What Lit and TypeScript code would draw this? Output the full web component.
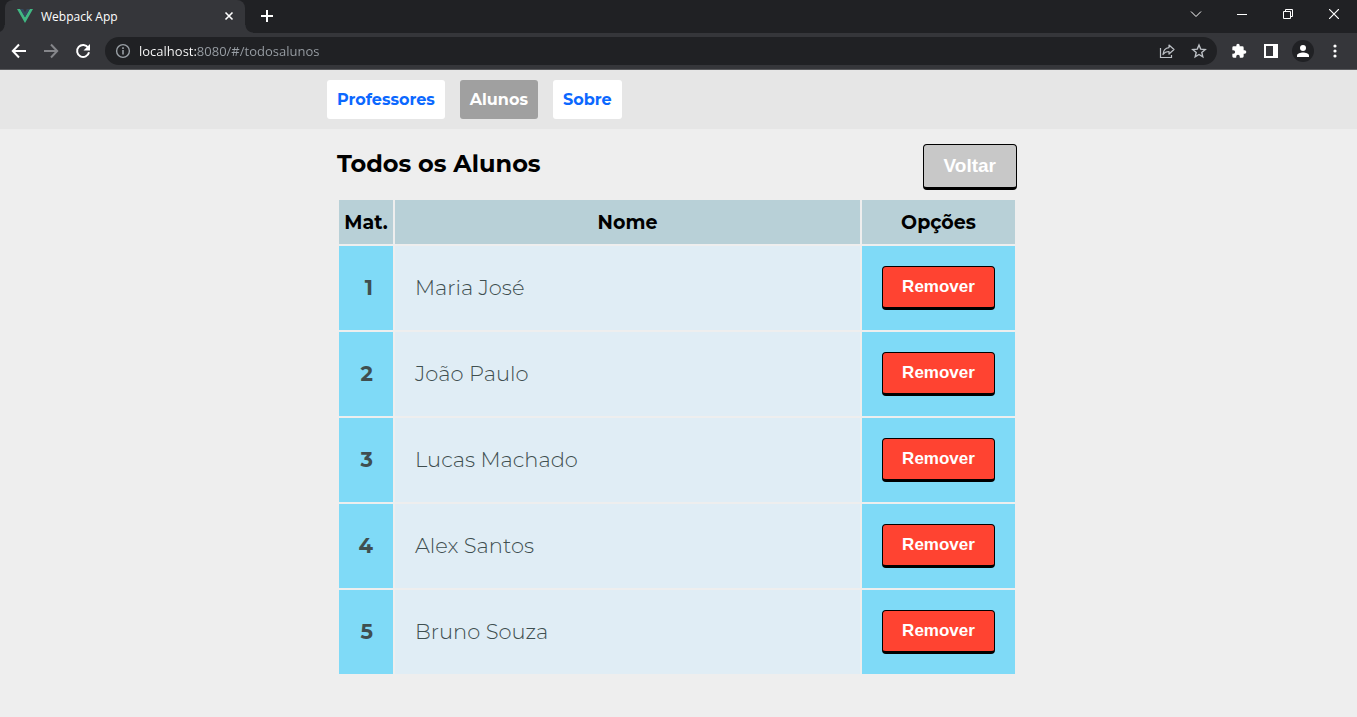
import { LitElement, html, css, svg } from "lit";
import { customElement, state } from "lit/decorators.js";

interface Aluno {
  mat: number;
  nome: string;
}

@customElement("browser-bar")
class BrowserBar extends LitElement {
  static styles = css`
    :host {
      display: block;
      font-family: "Segoe UI", "Open Sans", "Noto Sans", sans-serif;
      color: #fff;
      background: #202124;
    }
    button {
      display: grid;
      place-items: center;
      flex: none;
      padding: 0;
      border: 0;
      color: inherit;
      background: none;
    }
    svg {
      display: block;
      fill: none;
      stroke: currentColor;
    }
    .solid {
      fill: currentColor;
      stroke: none;
    }
    .strip {
      display: flex;
      height: 33px;
    }
    .flare-left {
      width: 5px;
      background: radial-gradient(circle at -3px 0, #202124 7px, #35363a 8px) bottom / 5px 8px no-repeat;
    }
    .flare-right {
      width: 8px;
      background: radial-gradient(circle at 8px 0, #202124 7px, #35363a 8px) bottom / 8px 8px no-repeat;
    }
    .tab {
      display: flex;
      align-items: center;
      box-sizing: border-box;
      width: 240px;
      padding: 0 8px 1px 12px;
      gap: 8px;
      font-size: 12px;
      background: #35363a;
      border-radius: 8px 8px 0 0;
    }
    .title {
      flex: 1;
    }
    .plus {
      width: 28px;
      height: 32px;
    }
    .controls {
      display: flex;
      margin-left: auto;
      height: 27px;
    }
    .controls button {
      width: 46px;
    }
    .toolbar {
      display: flex;
      align-items: center;
      height: 36px;
      padding-left: 3px;
      padding-right: 6px;
      background: #35363a;
      border-bottom: 1px solid #5a5b5e;
    }
    .toolbar button {
      width: 32px;
      height: 28px;
    }
    .toolbar .dim {
      color: #85868a;
    }
    .omnibox {
      display: flex;
      flex: 1;
      align-items: center;
      height: 28px;
      margin: 0 6px;
      padding: 0 2px 0 10px;
      border-radius: 14px;
      background: #202124;
      color: #bdc1c6;
    }
    .omnibox label {
      color: #9aa0a6;
    }
    .url {
      flex: 1;
      min-width: 0;
      margin-left: 8px;
      padding: 0;
      border: 0;
      outline: 0;
      font: 13px "Segoe UI", "Open Sans", "Noto Sans", sans-serif;
      color: transparent;
      background: linear-gradient(90deg, #fff 57px, #9aa0a6 57px);
      -webkit-background-clip: text;
      background-clip: text;
    }
    .avatar {
      display: grid;
      place-items: center;
      width: 22px;
      height: 22px;
      border-radius: 11px;
      background: #202124;
    }
  `;

  render() {
    return html`
      <div class="strip">
        <div class="flare-left"></div>
        <div class="tab">
          <svg width="16" height="16" viewBox="0 0 16 16">
            <path d="M0 1h3.200L8 9.300 12.800 1H16L8 15z" fill="#41b883" stroke="none" />
            <path d="M3.200 1h3L8 4.200 9.800 1h3L8 9.300z" fill="#35495e" stroke="none" />
          </svg>
          <span class="title">Webpack App</span>
          <button aria-label="Fechar guia">
            <svg width="16" height="16" viewBox="0 0 16 16" stroke-width="1.6">
              <path d="M4.500 4.500l7 7M11.500 4.500l-7 7" />
            </svg>
          </button>
        </div>
        <div class="flare-right"></div>
        <button class="plus" aria-label="Nova guia">
          <svg width="14" height="14" viewBox="0 0 14 14" stroke-width="2">
            <path d="M7 1v12M1 7h12" />
          </svg>
        </button>
        <div class="controls">
          <button aria-label="Pesquisar guias">
            <svg width="12" height="12" viewBox="0 0 12 12"><path d="M1 3.500l5 5 5-5" /></svg>
          </button>
          <button aria-label="Minimizar">
            <svg width="10" height="10" viewBox="0 0 10 10"><path d="M0 5.500h10" /></svg>
          </button>
          <button aria-label="Restaurar">
            <svg width="10" height="10" viewBox="0 0 10 10">
              <path d="M.5 2.500h7v7h-7zM2.500 2.500v-2h7v7h-2" />
            </svg>
          </button>
          <button aria-label="Fechar">
            <svg width="10" height="10" viewBox="0 0 10 10" stroke-width="1.2">
              <path d="M0 0l10 10M10 0L0 10" />
            </svg>
          </button>
        </div>
      </div>
      <div class="toolbar">
        <button aria-label="Voltar">
          <svg width="16" height="16" viewBox="0 0 16 16" stroke-width="2">
            <path d="M15 8H2M8 1.500L1.800 8 8 14.500" />
          </svg>
        </button>
        <button class="dim" aria-label="Avançar">
          <svg width="16" height="16" viewBox="0 0 16 16" stroke-width="2">
            <path d="M1 8h13M8 1.500L14.200 8 8 14.500" />
          </svg>
        </button>
        <button aria-label="Recarregar">
          <svg width="16" height="16" viewBox="0 0 16 16">
            <path d="M13.200 4.800A6 6 0 1 0 14 9.200" stroke-width="2" />
            <path class="solid" d="M15 1v6.500H8.500z" />
          </svg>
        </button>
        <div class="omnibox">
          <label for="url" aria-label="Endereço">
            <svg width="16" height="16" viewBox="0 0 16 16" stroke-width="1.4">
              <circle cx="8" cy="8" r="6.400" />
              <path d="M8 7v4.500M8 4.300v1.600" stroke-width="1.600" />
            </svg>
          </label>
          <input id="url" class="url" type="text" spellcheck="false" value="localhost:8080/#/todosalunos" />
          <button aria-label="Compartilhar">
            <svg width="16" height="16" viewBox="0 0 16 16" stroke-width="1.200">
              <path d="M1.500 5v9.500h11V12" />
              <path d="M10 2l5 4.500-5 4.500V8.500C7 8.500 5.300 9.500 4 11.500 4.300 7.500 6.500 5 10 4.600z" stroke-linejoin="round" />
            </svg>
          </button>
          <button aria-label="Favoritar">
            <svg width="16" height="16" viewBox="0 0 16 16" stroke-width="1.400">
              <path d="M8 2l1.700 4.100 4.500.4-3.400 2.900 1 4.400L8 11.500l-3.800 2.300 1-4.400L1.800 6.500l4.500-.4z" />
            </svg>
          </button>
        </div>
        <button aria-label="Extensões">
          <svg class="solid" width="16" height="16" viewBox="0 0 24 24">
            <path d="M20.500 11H19V7a2 2 0 0 0-2-2h-4V3.500a2.500 2.500 0 0 0-5 0V5H4a2 2 0 0 0-2 2v3.800h1.500a2.700 2.700 0 0 1 0 5.400H2V20a2 2 0 0 0 2 2h3.800v-1.500a2.700 2.700 0 0 1 5.400 0V22H17a2 2 0 0 0 2-2v-4h1.500a2.500 2.500 0 0 0 0-5z" />
          </svg>
        </button>
        <button aria-label="Painel lateral">
          <svg width="14" height="14" viewBox="0 0 14 14">
            <path class="solid" fill-rule="evenodd" d="M0 0h14v14H0zM2 2v10h7V2z" />
          </svg>
        </button>
        <button aria-label="Perfil">
          <span class="avatar">
            <svg class="solid" width="12" height="12" viewBox="0 0 12 12">
              <circle cx="6" cy="3" r="3" />
              <path d="M0 12v-1.500C0 8.500 3.500 7.500 6 7.500s6 1 6 3V12z" />
            </svg>
          </span>
        </button>
        <button aria-label="Menu">
          <svg class="solid" width="4" height="14" viewBox="0 0 4 14">
            ${[2, 7, 12].map((y) => svg`<circle cx="2" cy=${y} r="1.600" />`)}
          </svg>
        </button>
      </div>
    `;
  }
}

@customElement("app-root")
class AppRoot extends LitElement {
  @state() private alunos: Aluno[] = [
    { mat: 1, nome: "Maria José" },
    { mat: 2, nome: "João Paulo" },
    { mat: 3, nome: "Lucas Machado" },
    { mat: 4, nome: "Alex Santos" },
    { mat: 5, nome: "Bruno Souza" },
  ];

  static styles = css`
    :host {
      display: block;
      min-height: 100vh;
      font-family: Montserrat, Inter, sans-serif;
      color: #000;
      background: #eee;
    }
    nav {
      padding: 10px 0;
      background: #e6e6e6;
    }
    .wrap {
      box-sizing: border-box;
      max-width: 703px;
      margin: 0 auto;
    }
    .links {
      display: flex;
      gap: 15px;
    }
    .links a {
      padding: 10px;
      border-radius: 3px;
      font-size: 16px;
      font-weight: 700;
      line-height: 19px;
      text-decoration: none;
      color: #0b68ff;
      background: #fff;
    }
    .links .active {
      color: #fff;
      background: #a0a0a0;
    }
    main {
      padding: 15px 13px 0 10px;
    }
    .head {
      display: flex;
      align-items: flex-start;
      justify-content: space-between;
      margin-bottom: 8px;
    }
    h1 {
      margin: 0;
      font-size: 24px;
      font-weight: 700;
      line-height: 40px;
    }
    .btn {
      box-sizing: border-box;
      padding: 0 20px;
      border: 1px solid #000;
      border-bottom-width: 3px;
      border-radius: 4px;
      font-family: Arial, "Liberation Sans", sans-serif;
      font-weight: 700;
      color: #fff;
      white-space: nowrap;
    }
    .back {
      height: 46px;
      font-size: 19px;
      background: #c8c8c8;
    }
    .remove {
      display: block;
      width: 100%;
      height: 44px;
      padding: 0;
      font-size: 17px;
      background: #ff4331;
    }
    table {
      width: 100%;
      table-layout: fixed;
      border-spacing: 2px;
    }
    th {
      padding: 0;
      height: 44px;
      font-size: 19px;
      font-weight: 700;
      background: #b8d0d7;
    }
    .c-mat {
      width: 54px;
    }
    .c-op {
      width: 153px;
    }
    td {
      padding: 20px;
      font-size: 21px;
      font-weight: 300;
      line-height: 24px;
      color: #3f4f50;
      background: #e0edf5;
    }
    .mat {
      padding: 0 20px 0 0;
      text-align: right;
      font-weight: 700;
      background: #7fdaf7;
    }
    .op {
      background: #7fdaf7;
    }
  `;

  private remover(mat: number) {
    this.alunos = this.alunos.filter((a) => a.mat !== mat);
  }

  render() {
    return html`
      <browser-bar></browser-bar>
      <nav>
        <div class="wrap links">
          <a href="#/professores">Professores</a>
          <a class="active" href="#/todosalunos">Alunos</a>
          <a href="#/sobre">Sobre</a>
        </div>
      </nav>
      <main class="wrap">
        <div class="head">
          <h1>Todos os Alunos</h1>
          <button class="btn back">Voltar</button>
        </div>
        <table>
          <thead>
            <tr>
              <th class="c-mat" scope="col">Mat.</th>
              <th scope="col">Nome</th>
              <th class="c-op" scope="col">Opções</th>
            </tr>
          </thead>
          <tbody>
            ${this.alunos.map(
              (a) => html`<tr>
                <td class="mat">${a.mat}</td>
                <td>${a.nome}</td>
                <td class="op">
                  <button class="btn remove" @click=${() => this.remover(a.mat)}>Remover</button>
                </td>
              </tr>`
            )}
          </tbody>
        </table>
      </main>
    `;
  }
}
